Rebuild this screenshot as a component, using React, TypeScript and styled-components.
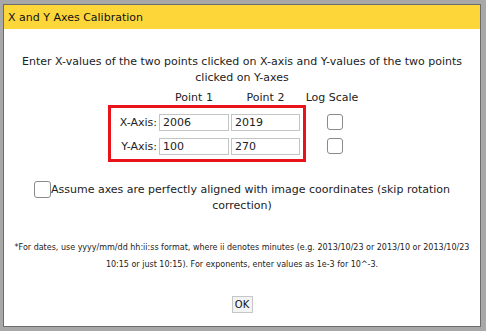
import React from "react";
import styled, { createGlobalStyle } from "styled-components";

const Global = createGlobalStyle`
  html, body { margin: 0; padding: 0; }
  body {
    background: #a8a8a8;
    font-family: "DejaVu Sans", Verdana, sans-serif;
    color: #222;
  }
`;

const Page = styled.div`
  width: 486px;
  height: 331px;
  box-sizing: border-box;
  padding: 4px 5px 4px 3px;
  background: #a8a8a8;
`;

const Dialog = styled.div`
  width: 478px;
  height: 323px;
  box-sizing: border-box;
  border: 1px solid #6c6c6c;
  background: #fff;
  display: flex;
  flex-direction: column;
`;

const TitleBar = styled.div`
  height: 24px;
  background: #fdd73a;
  display: flex;
  align-items: center;
  padding-left: 4px;
  font-size: 11px;
  color: #111;
`;

const Body = styled.div`
  display: flex;
  flex-direction: column;
`;

const Intro = styled.p`
  margin: 25px 0 0;
  font-size: 11px;
  line-height: 16px;
  text-align: center;
  padding: 0 10px;
`;

const Grid = styled.div`
  margin-top: 5px;
  padding-left: 104px;
  display: flex;
  flex-direction: column;
`;

const HeaderRow = styled.div`
  display: flex;
  font-size: 11px;
  line-height: 14px;
`;

const HeaderCell = styled.div<{ $w: number; $ml?: number }>`
  width: ${(p) => p.$w}px;
  margin-left: ${(p) => p.$ml ?? 0}px;
  text-align: center;
  white-space: nowrap;
`;

const BodyRow = styled.div`
  display: flex;
  align-items: flex-start;
`;

const RedBox = styled.div`
  border: 3px solid #e8131b;
  padding: 6px 3px 4px 7px;
  display: flex;
  flex-direction: column;
  gap: 7px;
`;

const AxisRow = styled.div`
  display: flex;
  align-items: center;
  gap: 2px;
`;

const AxisLabel = styled.span`
  width: 39px;
  font-size: 11px;
  text-align: right;
  white-space: nowrap;
`;

const ValueInput = styled.input<{ $w: number }>`
  width: ${(p) => p.$w}px;
  height: 17px;
  box-sizing: border-box;
  border: 1px solid #c4c4c4;
  padding: 0 3px;
  font-family: "DejaVu Sans", Verdana, sans-serif;
  font-size: 11px;
  color: #222;
  outline: none;
`;

const LogColumn = styled.div`
  padding-top: 9px;
  margin-left: 21px;
  display: flex;
  flex-direction: column;
  gap: 8px;
`;

const Box = styled.span<{ $s: number }>`
  display: inline-block;
  width: ${(p) => p.$s}px;
  height: ${(p) => p.$s}px;
  box-sizing: border-box;
  border: 1px solid #8a8a8a;
  border-radius: 3px;
  background: #fff;
  vertical-align: middle;
`;

const Assume = styled.p`
  margin: 19px 0 0;
  font-size: 11px;
  line-height: 16px;
  text-align: center;
  padding: 0 20px;
`;

const Footnote = styled.p`
  margin: 25px 0 0;
  font-size: 8px;
  line-height: 17px;
  text-align: center;
  padding: 0 5px;
`;

const Actions = styled.div`
  display: flex;
  justify-content: center;
  margin-top: 23px;
`;

const OkButton = styled.button`
  width: 21px;
  height: 17px;
  padding: 0;
  border: 1px solid #c6c6c6;
  background: #f3f3f3;
  font-family: "DejaVu Sans", Verdana, sans-serif;
  font-size: 10px;
  color: #111;
`;

export default function App() {
  return (
    <>
      <Global />
      <Page>
        <Dialog>
          <TitleBar>X and Y Axes Calibration</TitleBar>
          <Body>
            <Intro>
              Enter X-values of the two points clicked on X-axis and Y-values of the two points clicked on Y-axes
            </Intro>
            <Grid>
              <HeaderRow>
                <HeaderCell $w={70} $ml={51}>Point 1</HeaderCell>
                <HeaderCell $w={69} $ml={2}>Point 2</HeaderCell>
                <HeaderCell $w={60} $ml={2}>Log Scale</HeaderCell>
              </HeaderRow>
              <BodyRow>
                <RedBox>
                  <AxisRow>
                    <AxisLabel>X-Axis:</AxisLabel>
                    <ValueInput $w={70} defaultValue="2006" />
                    <ValueInput $w={69} defaultValue="2019" />
                  </AxisRow>
                  <AxisRow>
                    <AxisLabel>Y-Axis:</AxisLabel>
                    <ValueInput $w={70} defaultValue="100" />
                    <ValueInput $w={69} defaultValue="270" />
                  </AxisRow>
                </RedBox>
                <LogColumn>
                  <Box $s={16} />
                  <Box $s={16} />
                </LogColumn>
              </BodyRow>
            </Grid>
            <Assume>
              <Box $s={17} />Assume axes are perfectly aligned with image coordinates (skip rotation correction)
            </Assume>
            <Footnote>
              *For dates, use yyyy/mm/dd hh:ii:ss format, where ii denotes minutes (e.g. 2013/10/23 or 2013/10 or 2013/10/23 10:15 or just 10:15). For exponents, enter values as 1e-3 for 10^-3.
            </Footnote>
            <Actions>
              <OkButton>OK</OkButton>
            </Actions>
          </Body>
        </Dialog>
      </Page>
    </>
  );
}
